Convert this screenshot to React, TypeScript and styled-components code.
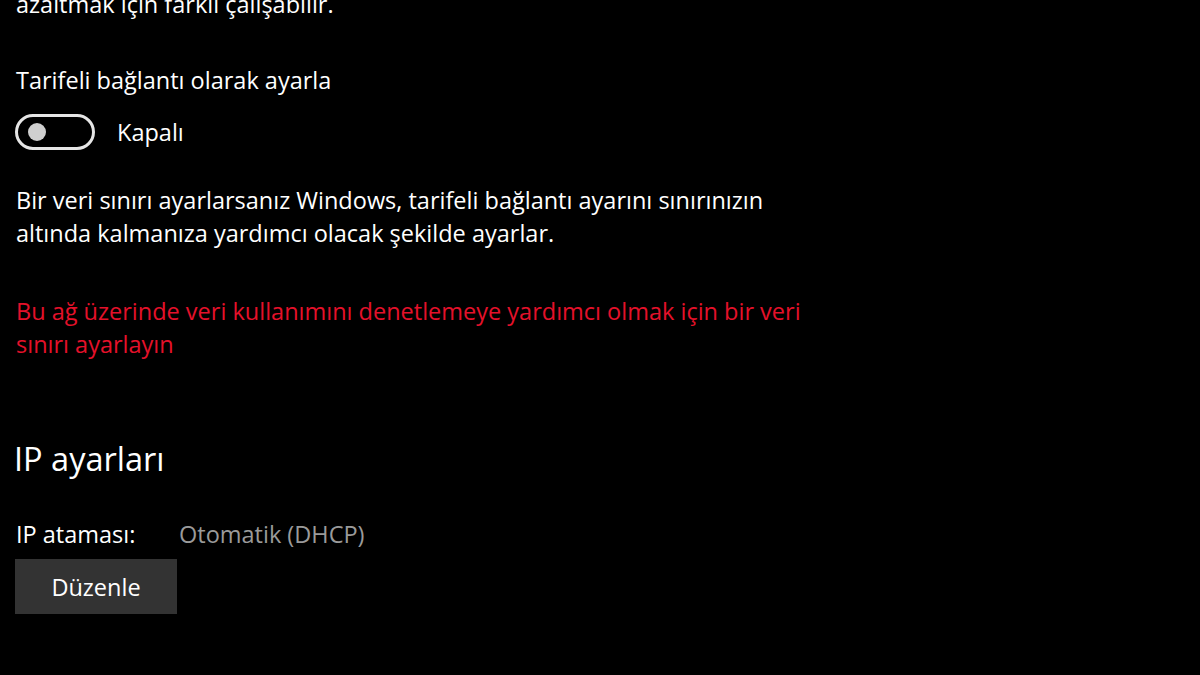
import React from "react";
import styled, { createGlobalStyle } from "styled-components";

const GlobalStyle = createGlobalStyle`
    html, body {
        margin: 0;
        padding: 0;
        background: #000;
    }
    body {
        font-family: "Open Sans", "Noto Sans", sans-serif;
        color: #fff;
    }
`;

const Page = styled.div`
    width: 1200px;
    height: 675px;
    overflow: hidden;
    background: #000;
    padding-left: 16px;
    box-sizing: border-box;
`;

const Text = styled.p<{ $color?: string; $gap?: number }>`
    margin: ${({ $gap }) => $gap ?? 0}px 0 0 0;
    font-size: 23.5px;
    line-height: 33px;
    color: ${({ $color }) => $color || "#fff"};
    max-width: 800px;
`;

const Intro = styled(Text)`
    margin-top: -12px;
`;

const ToggleRow = styled.div`
    display: flex;
    align-items: center;
    gap: 22px;
    margin-top: 17px;
    height: 36px;
    font-size: 23.5px;
`;

const Track = styled.div`
    width: 80px;
    height: 36px;
    box-sizing: border-box;
    border: 3px solid #e6e6e6;
    border-radius: 18px;
    display: flex;
    align-items: center;
    padding-left: 10px;
    margin-left: -1px;
`;

const Knob = styled.div`
    width: 18px;
    height: 18px;
    border-radius: 50%;
    background: #cfcfcf;
`;

const Heading = styled.h2`
    margin: 76px 0 0 -2px;
    font-size: 32.5px;
    font-weight: 400;
    line-height: 44px;
`;

const InfoRow = styled.div`
    display: flex;
    margin-top: 37px;
    font-size: 23.5px;
    line-height: 33px;
`;

const InfoLabel = styled.span`
    width: 163px;
`;

const InfoValue = styled.span`
    color: #9a9a9a;
`;

const Button = styled.button`
    margin: 8px 0 0 -1px;
    width: 162px;
    height: 55px;
    border: none;
    background: #333;
    color: #fff;
    font-family: inherit;
    font-size: 23.5px;
    cursor: pointer;
`;

const App: React.FC = () => {
    return (
        <>
            <GlobalStyle />
            <Page>
                <Intro>azaltmak için farklı çalışabilir.</Intro>
                <Text $gap={43}>Tarifeli bağlantı olarak ayarla</Text>
                <ToggleRow>
                    <Track>
                        <Knob />
                    </Track>
                    <span>Kapalı</span>
                </ToggleRow>
                <Text $gap={34}>
                    Bir veri sınırı ayarlarsanız Windows, tarifeli bağlantı ayarını sınırınızın
                    altında kalmanıza yardımcı olacak şekilde ayarlar.
                </Text>
                <Text $gap={45} $color="#e5112a">
                    Bu ağ üzerinde veri kullanımını denetlemeye yardımcı olmak için bir veri
                    sınırı ayarlayın
                </Text>
                <Heading>IP ayarları</Heading>
                <InfoRow>
                    <InfoLabel>IP ataması:</InfoLabel>
                    <InfoValue>Otomatik (DHCP)</InfoValue>
                </InfoRow>
                <Button>Düzenle</Button>
            </Page>
        </>
    );
};

export default App;
